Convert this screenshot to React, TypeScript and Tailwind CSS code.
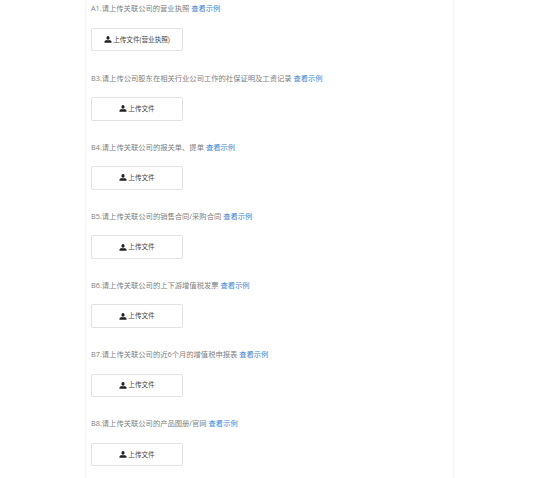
const rows = [
  ["A1.请上传关联公司的营业执照", "上传文件(营业执照)"],
  ["B3.请上传公司股东在相关行业公司工作的社保证明及工资记录", "上传文件"],
  ["B4.请上传关联公司的报关单、提单", "上传文件"],
  ["B5.请上传关联公司的销售合同/采购合同", "上传文件"],
  ["B6.请上传关联公司的上下游增值税发票", "上传文件"],
  ["B7.请上传关联公司的近6个月的增值税申报表", "上传文件"],
  ["B8.请上传关联公司的产品图册/官网", "上传文件"],
];

function UserIcon() {
  return (
    <svg width="8" height="7" viewBox="0 0 16 14" className="shrink-0" aria-hidden="true">
      <ellipse cx="8" cy="3.8" rx="3.2" ry="3.6" fill="#222" />
      <path d="M1 13.5 V11 C1 9.5 3.5 8.6 6 8 L8 9 L10 8 C12.5 8.6 15 9.5 15 11 V13.5 Z" fill="#222" />
    </svg>
  );
}

export default function App() {
  return (
    <div className="h-[478px] w-[537px] overflow-hidden bg-white font-['Open_Sans','Noto_Sans_CJK_SC',sans-serif]">
      <div className="ml-[85px] h-full w-[370px] border-x-2 border-[#f8f8f8] pl-[4px] pt-[2.4px]">
        {rows.map(([label, button]) => (
          <div key={label} className="h-[69.17px]">
            <p className="flex h-[13px] items-center whitespace-pre text-[7.3px] leading-[13px] text-[#808080]">
              {label} <span className="text-[#3f87d0]">查看示例</span>
            </p>
            <button className="mt-[12.4px] flex h-[23.6px] w-[92px] items-center justify-center gap-[1px] rounded-[2px] border border-[#e2e2e2] bg-white text-[6.6px] text-[#444]">
              <UserIcon />
              <span>{button}</span>
            </button>
          </div>
        ))}
      </div>
    </div>
  );
}
